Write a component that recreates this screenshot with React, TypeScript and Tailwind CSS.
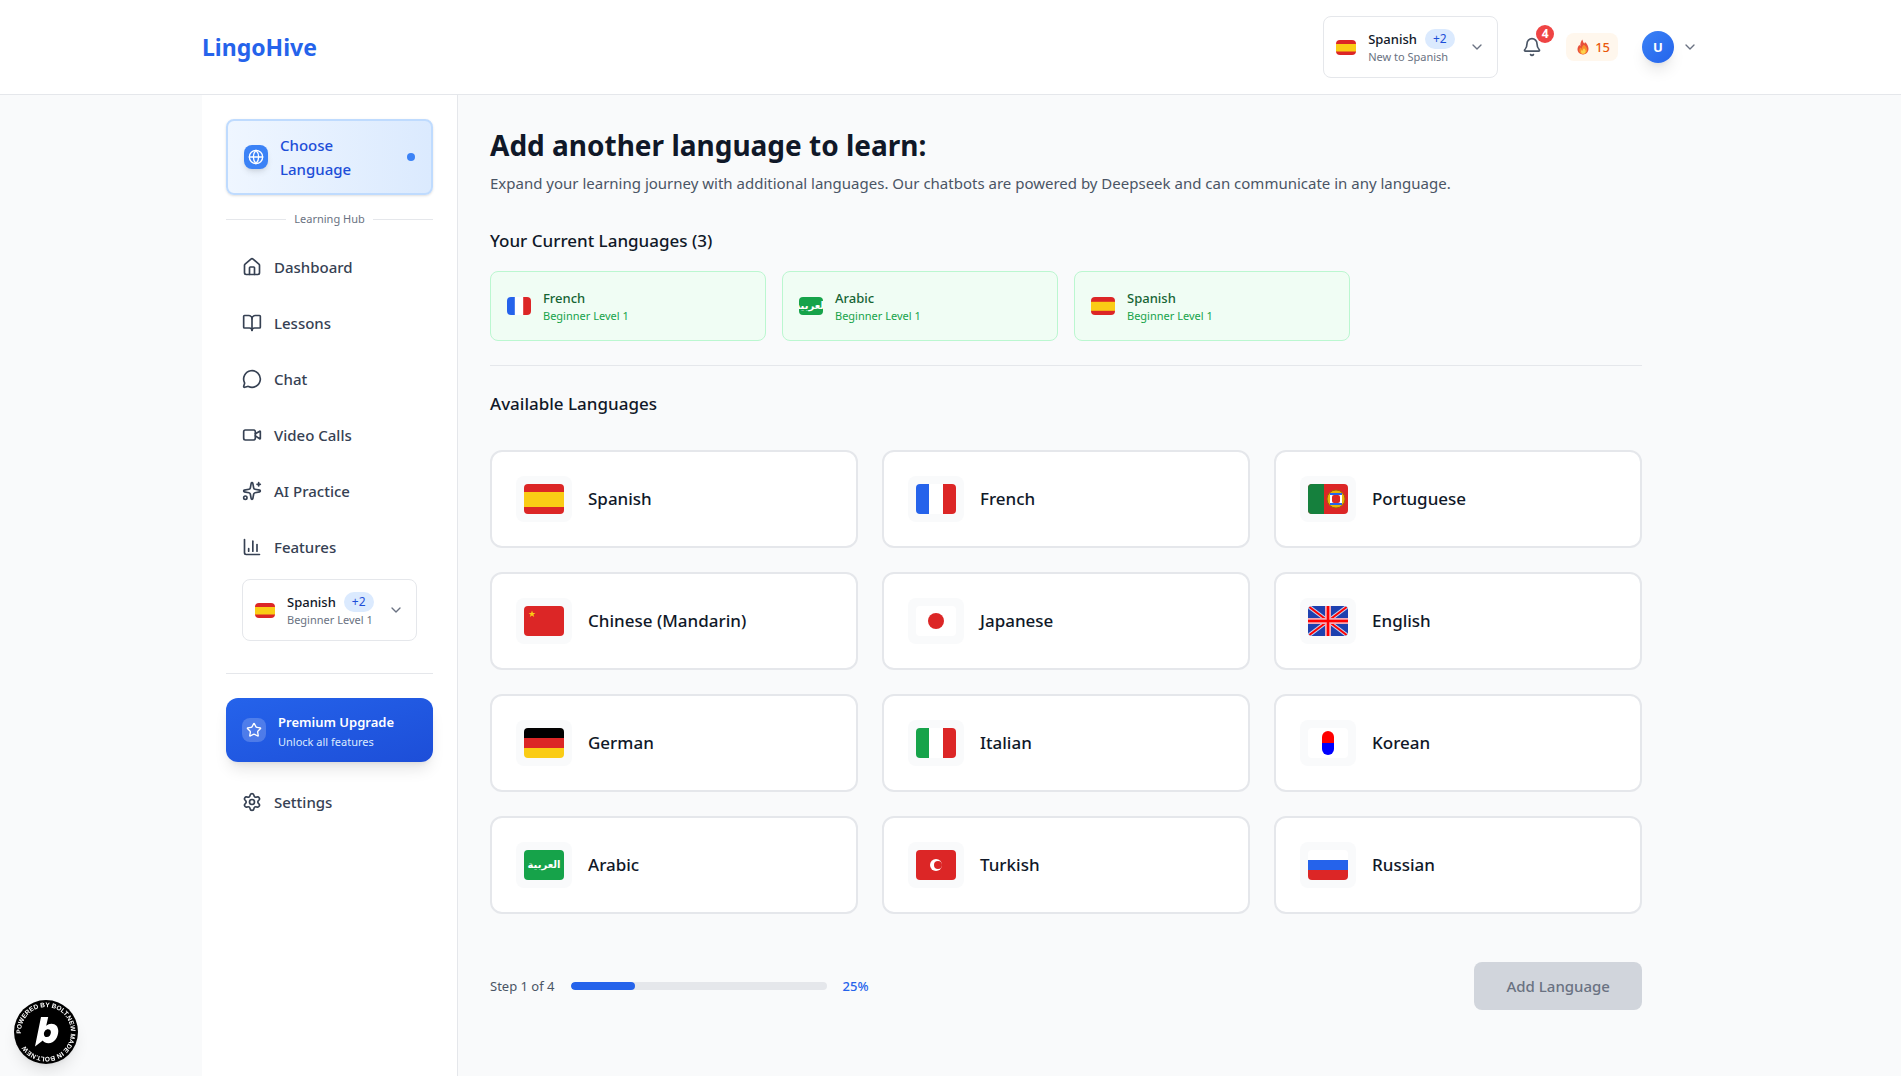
import type { ReactNode } from 'react';
import {
  Bell,
  BookOpen,
  ChartColumn,
  ChevronDown,
  Globe,
  House,
  MessageCircle,
  Settings,
  Sparkles,
  Star,
  Video,
  type LucideIcon,
} from 'lucide-react';

type LanguageCode =
  | 'es' | 'fr' | 'pt' | 'zh' | 'ja' | 'en'
  | 'de' | 'it' | 'ko' | 'ar' | 'tr' | 'ru';

const flagArt: Record<LanguageCode, ReactNode> = {
  es: (
    <>
      <rect width="40" height="30" fill="#dc2626" />
      <rect y="8" width="40" height="15" fill="#facc15" />
    </>
  ),
  fr: (
    <>
      <rect width="40" height="30" fill="#fff" />
      <rect width="13" height="30" fill="#2563eb" />
      <rect x="27" width="13" height="30" fill="#dc2626" />
    </>
  ),
  pt: (
    <>
      <rect width="40" height="30" fill="#dc2626" />
      <rect width="16" height="30" fill="#15803d" />
      <circle cx="28" cy="15" r="9" fill="#eab308" stroke="#a16207" />
      <rect x="22" y="9" width="12" height="12" fill="#fff" />
      <rect x="22" y="9" width="12" height="2" fill="#2563eb" />
      <rect x="22" y="19" width="12" height="2" fill="#2563eb" />
      <rect x="24" y="11" width="8" height="8" rx="2" fill="#dc2626" />
    </>
  ),
  zh: (
    <>
      <rect width="40" height="30" fill="#dc2626" />
      <path d="M8 4.6l.9 2.4h2.5l-2 1.5.8 2.5L8 9.500l-2.200 1.500.8-2.500-2-1.500h2.500z" fill="#facc15" />
    </>
  ),
  ja: (
    <>
      <rect width="40" height="30" fill="#fff" />
      <circle cx="20" cy="15" r="8" fill="#dc2626" />
    </>
  ),
  en: (
    <>
      <rect width="40" height="30" fill="#1e40af" />
      <path d="M0 0L40 30M40 0L0 30" stroke="#fff" strokeOpacity="0.75" strokeWidth="4" />
      <path d="M2 1.500L38 28.500M38 1.500L2 28.500" stroke="#f00" strokeWidth="2" strokeLinecap="round" />
      <path d="M20 0V30M0 15H40" stroke="#f6a9b4" strokeWidth="6" />
      <path d="M20 0V30M0 15H40" stroke="#f00" strokeWidth="2.500" />
    </>
  ),
  de: (
    <>
      <rect width="40" height="10" fill="#000" />
      <rect y="10" width="40" height="10" fill="#dc2626" />
      <rect y="20" width="40" height="10" fill="#facc15" />
    </>
  ),
  it: (
    <>
      <rect width="40" height="30" fill="#fff" />
      <rect width="13" height="30" fill="#16a34a" />
      <rect x="27" width="13" height="30" fill="#dc2626" />
    </>
  ),
  ko: (
    <>
      <rect width="40" height="30" fill="#fff" />
      <path d="M14 15V9a6 6 0 0 1 12 0v6z" fill="#f00" />
      <path d="M14 15v6a6 6 0 0 0 12 0v-6z" fill="#00f" />
    </>
  ),
  ar: <rect width="40" height="30" fill="#16a34a" />,
  tr: (
    <>
      <rect width="40" height="30" fill="#dc2626" />
      <circle cx="20" cy="15" r="6" fill="#fff" />
      <circle cx="22" cy="15" r="4" fill="#dc2626" />
    </>
  ),
  ru: (
    <>
      <rect width="40" height="10" fill="#fff" />
      <rect y="10" width="40" height="10" fill="#2563eb" />
      <rect y="20" width="40" height="10" fill="#dc2626" />
    </>
  ),
};

function Flag({ code, className }: { code: LanguageCode; className: string }) {
  return (
    <span className={`relative flex shrink-0 items-center justify-center overflow-hidden rounded ${className}`}>
      <svg viewBox="0 0 40 30" preserveAspectRatio="none" className="size-full" aria-hidden="true">
        {flagArt[code]}
      </svg>
      {code === 'ar' && (
        <span className="absolute inset-0 flex items-center justify-center font-['DejaVu_Sans',sans-serif] text-[10px] leading-4 font-bold whitespace-nowrap text-white">
          العربية
        </span>
      )}
    </span>
  );
}

function LanguageSwitcher({ status }: { status: string }) {
  return (
    <button
      type="button"
      className="flex min-w-[175px] items-center justify-between gap-3 rounded-lg border border-gray-200 bg-white px-3 py-3 text-left"
    >
      <Flag code="es" className="h-[15px] w-5" />
      <span className="grow">
        <span className="flex items-center gap-2">
          <span className="text-[13px] leading-5 font-medium text-gray-900">Spanish</span>
          <span className="rounded-full bg-[#dbeafe] px-2 py-0.5 text-[12px] leading-4 text-[#1d4ed8]">+2</span>
        </span>
        <span className="block text-[11px] leading-4 whitespace-nowrap text-gray-500">{status}</span>
      </span>
      <ChevronDown className="size-4 shrink-0 text-gray-500" />
    </button>
  );
}

function Flame() {
  return (
    <svg viewBox="0 0 12 16" className="h-4 w-3" aria-hidden="true">
      <path
        d="M5.200.500C6.200 2.300 6 3.400 7.300 4.600c.4-.5.600-1 .6-1.700 2 1.600 3.600 4.200 3.600 6.900 0 3.400-2.400 5.700-5.500 5.700S.5 13.300.5 10.300c0-2 .9-3.400 1.900-4.600.2.700.4 1.100.9 1.500C3.100 4.500 4 2.300 5.200.500z"
        fill="#e8503a"
      />
      <path
        d="M7 5.800c1.800 1.500 3.200 3 3.200 5.200 0 2.500-1.800 4.200-4 4.200S2.300 13.600 2.300 11.500c0-1.300.5-2.200 1.300-3 .2.700.6 1.100 1.100 1.300C4.800 8.200 5.600 6.700 7 5.800z"
        fill="#f98f2b"
      />
      <path d="M6.900 9.300c1.200 1 1.800 1.800 1.800 3 0 1.500-1 2.500-2.400 2.500s-2.300-.9-2.300-2.100c0-.7.200-1.200.6-1.700.3.400.6.600 1 .7.100-.9.500-1.700 1.300-2.400z" fill="#fcd34d" />
    </svg>
  );
}

function Header() {
  return (
    <header className="border-b border-gray-200 bg-white">
      <div className="mx-auto flex max-w-[1537px] items-center justify-between px-5 py-4">
        <a href="#" className="text-[23px] leading-8 font-bold text-[#2563eb]">LingoHive</a>
        <div className="flex items-center gap-4">
          <LanguageSwitcher status="New to Spanish" />
          <button type="button" aria-label="Notifications" className="relative p-2 text-gray-600">
            <Bell className="size-5" />
            <span className="absolute -top-1 -right-1 flex size-[18px] items-center justify-center rounded-full bg-[#ef4444] text-[12px] leading-4 font-bold text-white">
              4
            </span>
          </button>
          <div className="flex items-center gap-1.5 rounded-lg bg-[#fff7ed] py-1 pr-2 pl-[11px]">
            <Flame />
            <span className="text-[13px] leading-5 font-medium text-[#ea580c]">15</span>
          </div>
          <button type="button" aria-label="Account menu" className="flex items-center gap-2 pr-px pl-2">
            <span className="flex size-8 items-center justify-center rounded-full bg-linear-to-br from-[#3b82f6] to-[#2563eb] text-[13px] leading-5 font-bold text-white shadow-lg">
              U
            </span>
            <ChevronDown className="size-4 text-gray-500" />
          </button>
        </div>
      </div>
    </header>
  );
}

const navItems: { label: string; icon: LucideIcon }[] = [
  { label: 'Dashboard', icon: House },
  { label: 'Lessons', icon: BookOpen },
  { label: 'Chat', icon: MessageCircle },
  { label: 'Video Calls', icon: Video },
  { label: 'AI Practice', icon: Sparkles },
  { label: 'Features', icon: ChartColumn },
];

function NavLink({ label, icon: Icon }: { label: string; icon: LucideIcon }) {
  return (
    <a href="#" className="flex items-center gap-3 rounded-lg px-4 py-3 text-[15px] leading-6 font-medium text-gray-700">
      <Icon className="size-5" />
      {label}
    </a>
  );
}

function Sidebar() {
  return (
    <aside className="w-64 shrink-0 border-r border-gray-200 bg-white p-6">
      <a
        href="#"
        className="flex items-center gap-3 rounded-lg border-2 border-[#bfdbfe] bg-linear-to-r from-[#eff6ff] to-[#dbeafe] px-4 py-3 shadow-sm"
      >
        <span className="flex size-6 shrink-0 items-center justify-center rounded-lg bg-[#3b82f6] shadow-md">
          <Globe className="size-4 text-white" />
        </span>
        <span className="grow text-[15px] leading-6 font-medium text-[#1d4ed8]">Choose Language</span>
        <span className="size-2 shrink-0 rounded-full bg-[#3b82f6]" />
      </a>
      <div className="mt-4 flex items-center gap-2">
        <span className="h-px grow bg-gray-200" />
        <span className="text-[11px] leading-4 text-gray-500">Learning Hub</span>
        <span className="h-px grow bg-gray-200" />
      </div>
      <nav className="mt-4 flex flex-col gap-2">
        {navItems.map((item) => (
          <NavLink key={item.label} {...item} />
        ))}
      </nav>
      <div className="mt-2 px-4">
        <LanguageSwitcher status="Beginner Level 1" />
      </div>
      <hr className="mt-8 mb-6 border-gray-200" />
      <button
        type="button"
        className="flex w-full items-center gap-3 rounded-xl bg-linear-to-br from-[#2563eb] to-[#1d4ed8] px-4 py-3 text-left text-white shadow-lg"
      >
        <span className="flex size-6 shrink-0 items-center justify-center rounded-lg bg-white/20">
          <Star className="size-4" />
        </span>
        <span className="flex flex-col">
          <span className="text-[13px] leading-6 font-semibold">Premium Upgrade</span>
          <span className="text-[11px] leading-4 text-[#dbeafe]">Unlock all features</span>
        </span>
      </button>
      <div className="mt-4">
        <NavLink label="Settings" icon={Settings} />
      </div>
    </aside>
  );
}

const currentLanguages: { name: string; code: LanguageCode }[] = [
  { name: 'French', code: 'fr' },
  { name: 'Arabic', code: 'ar' },
  { name: 'Spanish', code: 'es' },
];

const availableLanguages: { name: string; code: LanguageCode }[] = [
  { name: 'Spanish', code: 'es' },
  { name: 'French', code: 'fr' },
  { name: 'Portuguese', code: 'pt' },
  { name: 'Chinese (Mandarin)', code: 'zh' },
  { name: 'Japanese', code: 'ja' },
  { name: 'English', code: 'en' },
  { name: 'German', code: 'de' },
  { name: 'Italian', code: 'it' },
  { name: 'Korean', code: 'ko' },
  { name: 'Arabic', code: 'ar' },
  { name: 'Turkish', code: 'tr' },
  { name: 'Russian', code: 'ru' },
];

function LanguagePicker() {
  const progress = 25;
  return (
    <main className="grow p-8">
      <div className="max-w-6xl">
        <h1 className="text-[28px] leading-9 font-bold text-gray-900">Add another language to learn:</h1>
        <p className="mt-2 text-[15px] leading-6 text-gray-600">
          Expand your learning journey with additional languages. Our chatbots are powered by Deepseek and can
          communicate in any language.
        </p>

        <section className="mt-8 border-b border-gray-200 pb-6">
          <h2 className="text-[17px] leading-7 font-medium text-gray-900">Your Current Languages (3)</h2>
          <ul className="mt-4 grid grid-cols-4 gap-4">
            {currentLanguages.map(({ name, code }) => (
              <li key={name} className="flex items-center gap-3 rounded-lg border border-[#bbf7d0] bg-[#f0fdf4] p-4">
                <Flag code={code} className="h-[18px] w-6" />
                <div>
                  <p className="text-[13px] leading-5 font-medium text-[#166534]">{name}</p>
                  <p className="text-[11px] leading-4 text-[#16a34a]">Beginner Level 1</p>
                </div>
              </li>
            ))}
          </ul>
        </section>

        <section className="mt-6">
          <h2 className="text-[17px] leading-7 font-medium text-gray-900">Available Languages</h2>
          <div className="mt-8 grid grid-cols-3 gap-6">
            {availableLanguages.map(({ name, code }) => (
              <button
                key={name}
                type="button"
                className="flex items-center gap-4 rounded-xl border-2 border-gray-200 bg-white p-6 text-left"
              >
                <span className="rounded-lg bg-gray-50 p-2">
                  <Flag code={code} className="h-[30px] w-10" />
                </span>
                <span className="text-[17px] leading-7 font-medium text-gray-900">{name}</span>
              </button>
            ))}
          </div>
        </section>

        <div className="mt-12 flex items-center justify-between">
          <div className="flex items-center gap-4">
            <span className="text-[13px] leading-5 text-gray-600">Step 1 of 4</span>
            <div
              role="progressbar"
              aria-label="Setup progress"
              aria-valuenow={progress}
              aria-valuemin={0}
              aria-valuemax={100}
              className="h-2 w-64 overflow-hidden rounded-full bg-gray-200"
            >
              <div className="h-full rounded-full bg-[#2563eb]" style={{ width: `${progress}%` }} />
            </div>
            <span className="text-[13px] leading-5 font-medium text-[#2563eb]">{progress}%</span>
          </div>
          <button
            type="button"
            disabled
            className="rounded-lg bg-gray-300 px-8 py-3 text-[15px] leading-6 font-medium text-gray-500"
          >
            Add Language
          </button>
        </div>
      </div>
    </main>
  );
}

function BoltBadge() {
  return (
    <a href="#" aria-label="Powered by Bolt.new" className="fixed bottom-3 left-3.5 size-16 rounded-full shadow-lg">
      <svg viewBox="0 0 128 128" className="size-full" aria-hidden="true">
        <circle cx="64" cy="64" r="64" fill="#000" />
        <defs>
          <path id="badge-ring" d="M14 64a50 50 0 1 1 100 0a50 50 0 1 1 -100 0" />
        </defs>
        <g transform="rotate(-4 64 64)">
          <text className="fill-white font-['Liberation_Sans',sans-serif] text-[13px] font-bold">
            <textPath href="#badge-ring">POWERED BY BOLT.NEW MADE IN BOLT.NEW</textPath>
          </text>
        </g>
        <path
          fillRule="evenodd"
          d="M54 34h14.400l-4 17.400c3-2.600 6.400-4 10.400-4 8.800 0 13.800 6 13.800 14.800 0 12.800-8 24.400-19.800 24.400-5 0-9-1.800-11.200-5.400L42 93zM68 58.400c-4.600 0-8.200 4.400-8.200 9.600 0 3.800 2.200 6.200 5.800 6.200 4.800 0 8.200-4.400 8.200-9.600 0-3.800-2.200-6.200-5.800-6.200z"
          fill="#fff"
        />
      </svg>
    </a>
  );
}

export default function App() {
  return (
    <div className="flex min-h-screen flex-col bg-gray-50 font-['Noto_Sans',sans-serif]">
      <Header />
      <div className="mx-auto flex w-full max-w-[1537px] grow px-5">
        <Sidebar />
        <LanguagePicker />
      </div>
      <BoltBadge />
    </div>
  );
}
